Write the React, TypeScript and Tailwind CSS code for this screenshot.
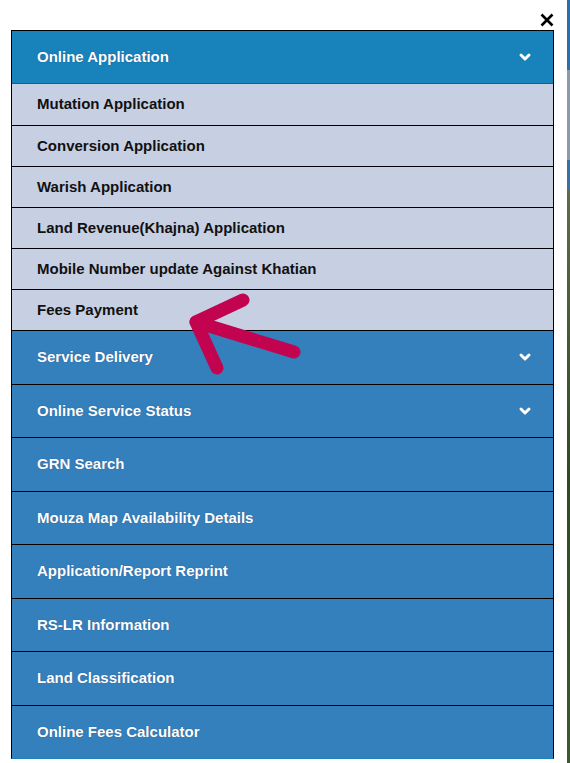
import { ChevronDown } from 'lucide-react';

const subItems = [
  'Mutation Application',
  'Conversion Application',
  'Warish Application',
  'Land Revenue(Khajna) Application',
  'Mobile Number update Against Khatian',
  'Fees Payment',
];

const mainItems: { label: string; drop?: boolean }[] = [
  { label: 'Service Delivery', drop: true },
  { label: 'Online Service Status', drop: true },
  { label: 'GRN Search' },
  { label: 'Mouza Map Availability Details' },
  { label: 'Application/Report Reprint' },
  { label: 'RS-LR Information' },
  { label: 'Land Classification' },
  { label: 'Online Fees Calculator' },
];

const glow = '[text-shadow:0_0_1px_rgba(20,40,90,0.6)]';

export default function App() {
  return (
    <div className="flex h-[763px] w-[570px] overflow-hidden bg-white font-['Liberation_Sans',Arial,sans-serif]">
      <div className="relative flex w-[567px] flex-col pl-[11px] pt-[30px]">
        {/* close button */}
        <button className="absolute left-[540px] top-[13px] text-black">
          <svg width="14" height="14" viewBox="0 0 14 14">
            <path d="M1.5 1.5 L12.5 12.5 M12.5 1.5 L1.5 12.5" stroke="currentColor" strokeWidth="2.6" />
          </svg>
        </button>

        <nav className="w-[543px] border-x border-t border-black border-b border-b-[#1a82b9]">
          <div className="flex h-[53px] items-center justify-between border-b border-[#0f5f8f] bg-[#1882ba] pl-[25px] pr-[20px]">
            <span className={`text-[15px] font-bold text-white ${glow}`}>Online Application</span>
            <ChevronDown size={16} strokeWidth={4.5} className="text-white" />
          </div>

          {subItems.map((s, i) => (
            <div
              key={s}
              className={`flex h-[41px] items-center bg-[#c7cfe3] pl-[25px] ${i > 0 ? 'border-t border-black' : ''}`}
            >
              <span className="text-[15px] font-bold text-[#111]">{s}</span>
            </div>
          ))}

          {mainItems.map((m) => (
            <div
              key={m.label}
              className="flex h-[53.5px] items-center justify-between border-t border-black bg-[#3480bc] pl-[25px] pr-[20px]"
            >
              <span className={`text-[15px] font-bold text-white ${glow}`}>{m.label}</span>
              {m.drop && <ChevronDown size={16} strokeWidth={4.5} className="text-white" />}
            </div>
          ))}
        </nav>

        {/* pointer arrow drawn over the menu */}
        <svg className="pointer-events-none absolute left-0 top-0" width="567" height="763">
          <g stroke="#c20350" strokeWidth="13" strokeLinecap="round" strokeLinejoin="round" fill="none">
            <path d="M294 352 L196 322" />
            <path d="M243 300 L196 322 L217 368" />
          </g>
        </svg>
      </div>

      {/* edge of the page behind the panel */}
      <div className="flex w-[3px] flex-col">
        <div className="h-[70px] bg-[#2d6fa8]" />
        <div className="h-[90px] bg-[#8a9aa8]" />
        <div className="h-[30px] bg-[#3a6fa0]" />
        <div className="flex-1 bg-gradient-to-b from-[#5f6b4a] via-[#2f4a22] to-[#3c5a2c]" />
      </div>
    </div>
  );
}
